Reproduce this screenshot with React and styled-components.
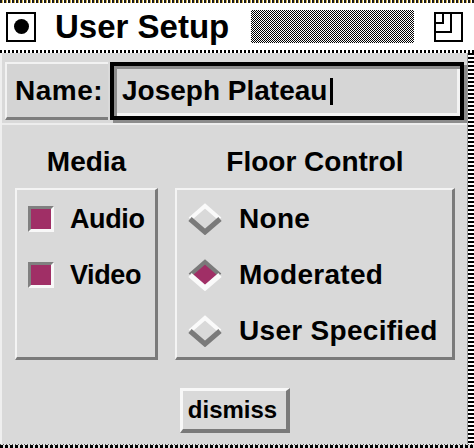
import React from "react";
import styled, { createGlobalStyle } from "styled-components";

const GlobalStyle = createGlobalStyle`
  html, body {
    margin: 0;
    padding: 0;
    background: #d9d9d9;
  }
  body {
    font-family: "Liberation Sans", Arial, sans-serif;
    color: #000;
  }
`;

const Window = styled.div`
  width: 474px;
  height: 448px;
  display: flex;
  flex-direction: column;
  background: #d9d9d9;
  overflow: hidden;
`;

const TitleBar = styled.div`
  box-sizing: border-box;
  height: 53px;
  flex: none;
  display: flex;
  align-items: center;
  padding: 3px 11px 3px 6px;
  background:
    repeating-linear-gradient(90deg, #1a1a1a 0 2px, #d7b54a 2px 3px, #fff 3px 4px) top / 100% 3px no-repeat,
    repeating-linear-gradient(90deg, #000 0 2px, #fff 2px 4px) bottom / 100% 3px no-repeat,
    #fff;
`;

const CloseBox = styled.div`
  box-sizing: border-box;
  width: 30px;
  height: 30px;
  border: 2px solid #000;
  display: flex;
  align-items: center;
  justify-content: center;
  flex: none;

  &::after {
    content: "";
    width: 15px;
    height: 15px;
    border-radius: 50%;
    background: #000;
  }
`;

const Title = styled.span`
  margin-left: 19px;
  font-size: 33px;
  font-weight: 700;
  white-space: nowrap;
`;

const Stipple = styled.div`
  width: 163px;
  height: 33px;
  margin-left: auto;
  margin-right: 20px;
  background: repeating-conic-gradient(#000 0 25%, #fff 0 50%) 0 0 / 2px 2px;
`;

const Body = styled.div`
  flex: 1;
  display: flex;
`;

const Content = styled.div`
  flex: 1;
  display: flex;
  flex-direction: column;
  border-left: 2px solid #efefef;
`;

const SideEdge = styled.div`
  width: 7px;
  flex: none;
  border-left: 1px solid #9a9a9a;
  background: repeating-linear-gradient(180deg, #000 0 2px, #fff 2px 4px);
`;

const BottomEdge = styled.div`
  height: 4px;
  flex: none;
  background:
    repeating-linear-gradient(90deg, #555 0 1px, #e6e6e6 1px 3px) top / 100% 1px no-repeat,
    repeating-linear-gradient(90deg, #000 0 3px, #e0e0e0 3px 5px) bottom / 100% 3px no-repeat,
    #d9d9d9;
`;

const NameRow = styled.div`
  box-sizing: border-box;
  height: 72px;
  flex: none;
  display: flex;
  gap: 2px;
  padding: 9px 3px 3px 3px;
  border-bottom: 2px solid #ededed;
`;

const NameLabel = styled.div`
  box-sizing: border-box;
  width: 103px;
  display: flex;
  align-items: center;
  padding-left: 8px;
  background: #d4d4d4;
  border-top: 2px solid #f2f2f2;
  border-left: 2px solid #f2f2f2;
  border-bottom: 3px solid #7d7d7d;
  font-size: 28px;
  font-weight: 700;
  letter-spacing: 0.5px;
`;

const NameField = styled.div`
  box-sizing: border-box;
  flex: 1;
  display: flex;
  align-items: center;
  padding-left: 8px;
  background: #d6d6d6;
  border: 4px solid #000;
  box-shadow: 3px 3px 0 #8c8c8c, inset 3px 3px 0 #8c8c8c, inset -3px -3px 0 #f4f4f4;
  font-size: 28px;
  font-weight: 700;
  white-space: nowrap;
`;

const Caret = styled.span`
  display: inline-block;
  width: 3px;
  height: 27px;
  margin-left: 3px;
  background: #000;
`;

const Main = styled.div`
  flex: 1;
  display: flex;
  flex-direction: column;
  padding: 21px 12px 0 13px;
`;

const Columns = styled.div`
  display: grid;
  grid-template-columns: 143px 280px;
  gap: 17px;
`;

const Column = styled.div`
  display: flex;
  flex-direction: column;
`;

const Heading = styled.div`
  text-align: center;
  font-size: 28px;
  font-weight: 700;
  line-height: 32px;
  margin-bottom: 10px;
  white-space: nowrap;
`;

const GroupBox = styled.div`
  box-sizing: border-box;
  height: 172px;
  padding: 1px 0 0 ${(p) => p.$inset}px;
  border-top: 2px solid #f4f4f4;
  border-left: 2px solid #f4f4f4;
  border-right: 3px solid #7a7a7a;
  border-bottom: 3px solid #7a7a7a;
`;

const Option = styled.div`
  height: 56px;
  display: flex;
  align-items: center;
  gap: ${(p) => p.$gap}px;
  font-size: ${(p) => p.$size}px;
  font-weight: 700;
  letter-spacing: ${(p) => p.$spacing}px;
  white-space: nowrap;
`;

const CheckBox = styled.span`
  box-sizing: border-box;
  width: 26px;
  height: 26px;
  flex: none;
  border: 3px solid;
  border-color: #808080 #f8f8f8 #f8f8f8 #808080;
  background: ${(p) => (p.$checked ? "#a02f66" : "#d9d9d9")};
`;

const Footer = styled.div`
  display: flex;
  justify-content: center;
  padding-top: 28px;
`;

const DismissButton = styled.button`
  box-sizing: border-box;
  width: 110px;
  height: 45px;
  padding: 0 4px 0 0;
  background: #d9d9d9;
  border-style: solid;
  border-width: 3px 4px 4px 3px;
  border-color: #f8f8f8 #7a7a7a #7a7a7a #f8f8f8;
  font-family: "Liberation Sans", Arial, sans-serif;
  font-size: 24px;
  font-weight: 700;
  color: #000;
`;

const ZoomIcon = () => (
  <svg width="29" height="30" viewBox="0 0 29 30" fill="none" stroke="#000" strokeWidth="2">
    <rect x="1" y="1" width="27" height="28" />
    <path d="M9 1 V11 H1" />
    <path d="M17 1 V20 H1" />
  </svg>
);

const Diamond = ({ selected }) => (
  <svg width="36" height="32" viewBox="0 0 36 32" style={{ flex: "none" }}>
    {selected && <polygon points="18,3 33,16 18,29 3,16" fill="#a02f66" />}
    <polyline points="3,16 18,3 33,16" fill="none" stroke={selected ? "#7a7a7a" : "#fafafa"} strokeWidth="4" />
    <polyline points="3,16 18,29 33,16" fill="none" stroke={selected ? "#fafafa" : "#7a7a7a"} strokeWidth="5" />
  </svg>
);

const media = [
  { label: "Audio", checked: true },
  { label: "Video", checked: true },
];

const floor = [
  { label: "None", selected: false },
  { label: "Moderated", selected: true },
  { label: "User Specified", selected: false },
];

const App = () => {
  return (
    <>
      <GlobalStyle />
      <Window>
        <TitleBar>
          <CloseBox />
          <Title>User Setup</Title>
          <Stipple />
          <ZoomIcon />
        </TitleBar>
        <Body>
          <Content>
            <NameRow>
              <NameLabel>Name:</NameLabel>
              <NameField>
                Joseph Plateau
                <Caret />
              </NameField>
            </NameRow>
            <Main>
              <Columns>
                <Column>
                  <Heading>Media</Heading>
                  <GroupBox $inset={11}>
                    {media.map((m) => (
                      <Option key={m.label} $gap={16} $size={27} $spacing={-0.4}>
                        <CheckBox $checked={m.checked} />
                        {m.label}
                      </Option>
                    ))}
                  </GroupBox>
                </Column>
                <Column>
                  <Heading>Floor Control</Heading>
                  <GroupBox $inset={10}>
                    {floor.map((f) => (
                      <Option key={f.label} $gap={16} $size={28} $spacing={0.3}>
                        <Diamond selected={f.selected} />
                        {f.label}
                      </Option>
                    ))}
                  </GroupBox>
                </Column>
              </Columns>
              <Footer>
                <DismissButton>dismiss</DismissButton>
              </Footer>
            </Main>
          </Content>
          <SideEdge />
        </Body>
        <BottomEdge />
      </Window>
    </>
  );
};

export default App;
